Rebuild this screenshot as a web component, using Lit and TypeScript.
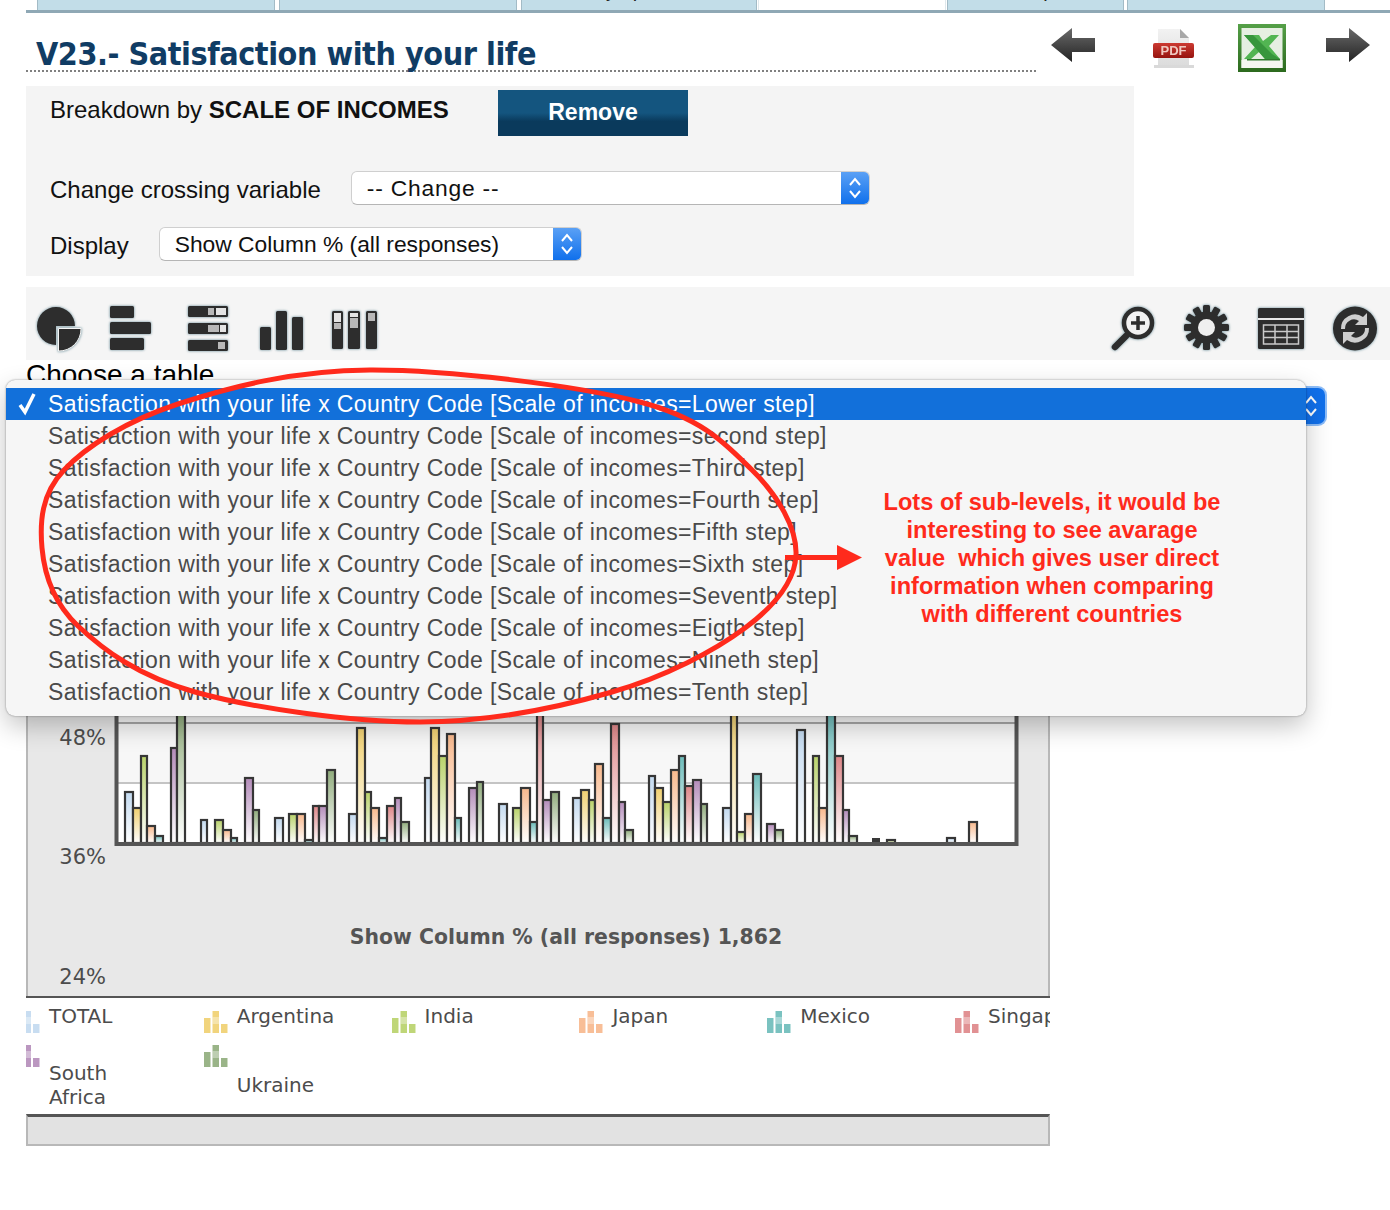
import { LitElement, html, css, svg } from "lit";
import { customElement } from "lit/decorators.js";

const COLORS: Record<string, string> = {
  b: "#c3daf0",
  y: "#f0d070",
  g: "#b9d26a",
  o: "#f8b88c",
  t: "#6cbcba",
  r: "#de8688",
  p: "#b48cba",
  v: "#90ac7c",
};

// x0, x1, top, colour: measured off the plot, page coordinates
const BARS: [number, number, number, string][] = [
  [125, 133, 791, "b"], [133, 141, 807, "y"], [141, 147, 755, "g"], [147, 155, 825, "o"], [155, 163, 835, "t"],
  [171, 177, 747, "p"], [177, 185, 710, "v"],
  [201, 207, 819, "b"], [215, 223, 819, "g"], [223, 231, 829, "o"], [231, 237, 837, "t"], [245, 253, 777, "p"], [253, 259, 809, "v"],
  [275, 283, 817, "b"], [289, 297, 813, "g"], [297, 305, 813, "o"], [305, 313, 839, "t"], [313, 319, 805, "r"], [319, 327, 805, "p"], [327, 335, 769, "v"],
  [349, 357, 813, "b"], [357, 365, 727, "y"], [365, 371, 791, "g"], [371, 379, 807, "o"], [379, 387, 837, "t"], [387, 395, 805, "r"], [395, 401, 797, "p"], [401, 409, 821, "v"],
  [425, 431, 777, "b"], [431, 439, 727, "y"], [439, 447, 755, "g"], [447, 455, 733, "o"], [455, 461, 817, "t"], [469, 477, 787, "p"], [477, 483, 781, "v"],
  [499, 507, 803, "b"], [513, 521, 807, "g"], [521, 530, 787, "o"], [530, 537, 821, "t"], [537, 543, 710, "r"], [543, 551, 799, "p"], [551, 559, 791, "v"],
  [573, 581, 797, "b"], [581, 589, 789, "y"], [589, 595, 799, "g"], [595, 603, 763, "o"], [603, 611, 817, "t"], [611, 619, 723, "r"], [619, 625, 801, "p"], [625, 633, 829, "v"],
  [649, 655, 775, "b"], [655, 663, 787, "y"], [663, 671, 801, "g"], [671, 679, 769, "o"], [679, 685, 755, "t"], [685, 693, 785, "r"], [693, 701, 779, "p"], [701, 707, 803, "v"],
  [723, 731, 807, "b"], [731, 737, 710, "y"], [737, 745, 831, "g"], [745, 753, 813, "o"], [753, 761, 773, "t"], [767, 775, 823, "p"], [775, 783, 829, "v"],
  [797, 805, 729, "b"], [813, 819, 755, "g"], [819, 827, 807, "o"], [827, 835, 710, "t"], [835, 843, 755, "r"], [843, 849, 809, "p"], [849, 857, 835, "v"],
  [887, 895, 839, "g"], [947, 955, 837, "b"], [969, 977, 821, "o"],
];

const LEGEND: { name: string[]; c: string }[] = [
  { name: ["TOTAL"], c: "b" },
  { name: ["Argentina"], c: "y" },
  { name: ["India"], c: "g" },
  { name: ["Japan"], c: "o" },
  { name: ["Mexico"], c: "t" },
  { name: ["Singapore"], c: "r" },
  { name: ["South", "Africa"], c: "p" },
  { name: ["Ukraine"], c: "v" },
];

const TABS: { w: number; gap: number; active?: boolean; label?: string; at?: number }[] = [
  { w: 238, gap: 0 },
  { w: 238, gap: 4 },
  { w: 236, gap: 4, label: "Country / profile", at: 24 },
  { w: 188, gap: 1, active: true },
  { w: 177, gap: 1, label: "Comparison", at: 53 },
  { w: 198, gap: 3 },
];

const OPTIONS = ["Lower", "second", "Third", "Fourth", "Fifth", "Sixth", "Seventh", "Eigth", "Nineth", "Tenth"];

// the hand drawn circle round the list, it is not a true ellipse
const LOOP: [number, number][] = [
  [42, 548], [64, 470], [178, 404], [370, 370], [640, 402], [752, 470],
  [796, 555], [745, 628], [612, 692], [420, 722], [195, 692], [78, 626],
];

const smoothLoop = (pts: [number, number][]) => {
  const n = pts.length;
  let d = `M${pts[0][0]} ${pts[0][1]}`;
  for (let i = 0; i < n; i++) {
    const [p0, p1, p2, p3] = [pts[(i + n - 1) % n], pts[i], pts[(i + 1) % n], pts[(i + 2) % n]];
    d += `C${p1[0] + (p2[0] - p0[0]) / 6} ${p1[1] + (p2[1] - p0[1]) / 6} ${p2[0] - (p3[0] - p1[0]) / 6} ${p2[1] - (p3[1] - p1[1]) / 6} ${p2[0]} ${p2[1]}`;
  }
  return d + "Z";
};

const PANEL_TOP = 430;

const chart = () => {
  const grads = Object.entries(COLORS).map(
    ([k, c]) => svg`<linearGradient id="bar-${k}" x1="0" y1="0" x2="0" y2="1">
      <stop offset="0" stop-color=${c}></stop>
      <stop offset="1" stop-color="#ffffff"></stop>
    </linearGradient>`
  );
  const bars = BARS.map(
    ([x0, x1, top, c]) => svg`<rect x=${x0 - 26} y=${top + 1 - PANEL_TOP} width=${x1 - x0} height=${842 - top}
      fill="url(#bar-${c})" stroke="#363636" stroke-width="2.2"></rect>`
  );
  const T = PANEL_TOP;
  return html`<svg class="chart" width="1024" height=${996 - T} viewBox="0 0 1024 ${996 - T}">
    <defs>${grads}</defs>
    <rect x="91" y=${600 - T} width="899" height="183" fill="#f7f7f7"></rect>
    <rect x="91" y=${783 - T} width="899" height="60" fill="#ffffff"></rect>
    <rect x="91" y=${722 - T} width="899" height="2" fill="#a8a8a8"></rect>
    <rect x="91" y=${782 - T} width="899" height="2" fill="#c4c4c4"></rect>
    ${bars}
    <rect x=${872 - 26} y=${838 - T} width="8" height="5" fill="#383838"></rect>
    <path d="M90.5 ${600 - T}V${844 - T}H990.5V${600 - T}" fill="none" stroke="#555555" stroke-width="4"></path>
    <text class="tick" x="80" y=${745 - T} text-anchor="end">48%</text>
    <text class="tick" x="80" y=${864 - T} text-anchor="end">36%</text>
    <text class="tick" x="80" y=${984 - T} text-anchor="end">24%</text>
    <text class="ctitle" x="540" y=${944 - T} text-anchor="middle">Show Column % (all responses) 1,862</text>
  </svg>`;
};

const legendIcon = (c: string) => html`<svg class="licon" width="24" height="22" viewBox="0 0 24 22">
  <rect x="0" y="7" width="6.5" height="15" fill=${COLORS[c]}></rect>
  <rect x="8.5" y="0" width="6.5" height="22" fill=${COLORS[c]}></rect>
  <rect x="8.5" y="6" width="6.5" height="7" fill="#ffffff" opacity="0.35"></rect>
  <rect x="17" y="13" width="6.5" height="9" fill=${COLORS[c]}></rect>
</svg>`;

@customElement("app-root")
export class AppRoot extends LitElement {
  static styles = css`
    :host {
      display: block;
      position: relative;
      width: 1390px;
      height: 1210px;
      overflow: hidden;
      background: #fff;
      font-family: "Liberation Sans", Arial, sans-serif;
      color: #111;
    }
    .tabs {
      display: flex;
      height: 10px;
      padding-left: 37px;
      align-items: stretch;
    }
    .tabline {
      height: 3px;
      margin-left: 26px;
      background: #8fa8b5;
    }
    .tab {
      box-sizing: border-box;
      background: #c2dde8;
      border: 1px solid #a3bbc6;
      border-width: 0 1px;
      overflow: hidden;
      position: relative;
    }
    .tab.active {
      background: #fff;
      border-color: #dfe8ec;
    }
    .tab span {
      position: absolute;
      bottom: 10px;
      font: 20px "Liberation Sans", sans-serif;
      color: #222;
      line-height: 1;
      white-space: nowrap;
    }
    .head {
      display: flex;
      height: 73px;
      padding-left: 26px;
    }
    .title {
      width: 1010px;
      height: 59px;
      box-sizing: border-box;
      margin: 0;
      padding: 23px 0 0 10px;
      border-bottom: 2px dotted #808080;
      font: bold 32px/36px "DejaVu Sans Condensed", "DejaVu Sans", sans-serif;
      letter-spacing: -0.45px;
      color: #103c64;
      white-space: nowrap;
    }
    .head-icons {
      display: flex;
      align-items: flex-start;
      padding: 11px 0 0 15px;
    }
    .head-icons svg {
      display: block;
      filter: blur(0.4px);
    }
    .i-prev { margin-top: 4px; }
    .i-pdf { margin: 3px 0 0 57px; }
    .i-xls { margin-left: 42px; }
    .i-next { margin: 4px 0 0 40px; }
    .breakdown {
      width: 1108px;
      height: 190px;
      margin-left: 26px;
      box-sizing: border-box;
      background: #f4f4f4;
      padding: 4px 0 0 24px;
      font-size: 24px;
    }
    .row1 {
      display: flex;
      align-items: flex-start;
      height: 81px;
    }
    .row1 .lbl {
      width: 448px;
      padding-top: 4px;
      line-height: 32px;
    }
    .remove {
      width: 190px;
      height: 46px;
      padding: 0 0 1px;
      border: 0;
      color: #fff;
      font: bold 23px "Liberation Sans", sans-serif;
      background: linear-gradient(#14557f 0, #14557f 50%, #0a3a5c 68%, #0a3a5c 100%);
    }
    .row {
      display: flex;
      align-items: center;
      gap: 30px;
      height: 34px;
    }
    .row + .row { margin-top: 22px; }
    .row > span { padding-top: 3px; }
    .select {
      position: relative;
      box-sizing: border-box;
      height: 34px;
      background: #fff;
      border: 1px solid #cfcfcf;
      border-bottom-color: #b5b5b5;
      border-radius: 6px;
      padding-left: 15px;
      font-size: 22.8px;
      line-height: 32px;
      overflow: hidden;
      white-space: nowrap;
    }
    .select.wide { letter-spacing: 0.8px; }
    .select .arrow {
      position: absolute;
      right: 0;
      top: 0;
      bottom: 0;
      width: 28px;
      background: linear-gradient(#5aa0f5, #1070ec);
      display: flex;
      align-items: center;
      justify-content: center;
    }
    .toolbar {
      display: flex;
      justify-content: space-between;
      align-items: flex-start;
      height: 73px;
      margin: 11px 0 0 26px;
      background: #f5f5f5;
    }
    .tools {
      display: flex;
      align-items: flex-start;
      padding-top: 18px;
    }
    .tools svg {
      display: block;
      filter: drop-shadow(0 0 1px #90a8b0) drop-shadow(0 0 1px #b4c6cc);
    }
    .choose {
      margin-left: 26px;
      height: 28px;
      font-size: 28px;
      line-height: 30px;
      color: #000;
    }
    .selectrow {
      position: relative;
      margin-left: 26px;
      width: 1299px;
      height: 36px;
      border-radius: 7px;
      background: #1070ec;
      box-shadow: 0 0 0 2px #8dbdf8;
    }
    .selectrow svg {
      position: absolute;
      right: 7px;
      top: 5px;
    }
    .gap { height: 6px; }
    .panel {
      width: 1024px;
      margin-left: 26px;
      position: relative;
      height: 566px;
      background: #e8e8e8;
    }
    .panel::before, .panel::after {
      content: "";
      position: absolute;
      top: 0;
      bottom: 0;
      width: 2px;
      background: #b8b8b8;
    }
    .panel::before { left: 0; }
    .panel::after { right: 0; }
    .chart { display: block; position: relative; }
    .tick {
      font: 21px "DejaVu Sans", sans-serif;
      fill: #4c4c4c;
    }
    .ctitle {
      font: bold 20.4px "DejaVu Sans", sans-serif;
      fill: #555;
    }
    .legend {
      width: 1024px;
      height: 118px;
      margin-left: 26px;
      box-sizing: border-box;
      border-top: 2px solid #555;
      overflow: hidden;
      color: #4c4c4c;
      font: 20px/24px "DejaVu Sans", sans-serif;
    }
    .legend-grid {
      display: grid;
      grid-template-columns: repeat(6, 187.8px);
      grid-template-rows: 42px 73px;
      margin-left: -10px;
      padding-top: 5px;
    }
    .item {
      display: flex;
      gap: 9px;
      white-space: nowrap;
    }
    .licon {
      flex: none;
      margin-top: 8px;
      opacity: 0.9;
      filter: blur(0.3px);
    }
    .item .name { padding-top: 1px; }
    .legend-grid .item:nth-child(n + 7) .licon { margin-top: 0; }
    .legend-grid .item:nth-child(n + 7) .name { align-self: center; padding-top: 6px; }
    .foot {
      width: 1024px;
      height: 32px;
      margin-left: 26px;
      box-sizing: border-box;
      background: #e2e2e2;
      border: 2px solid #b8b8b8;
      border-top: 3px solid #555;
    }
    .dropdown {
      position: absolute;
      left: 6px;
      top: 380px;
      width: 1300px;
      height: 336px;
      box-sizing: border-box;
      padding-top: 8px;
      border-radius: 9px;
      background: #f6f6f6;
      box-shadow: 0 0 2px rgba(0, 0, 0, 0.45), 0 10px 26px rgba(0, 0, 0, 0.24);
      font-size: 23px;
      letter-spacing: 0.38px;
      color: #4a4a4a;
    }
    .opt {
      position: relative;
      height: 32px;
      line-height: 33px;
      padding-left: 42px;
      white-space: nowrap;
    }
    .opt.sel {
      background: #1270da;
      color: #fff;
    }
    .opt .check {
      position: absolute;
      left: 11px;
      top: 0;
    }
    .markup {
      position: absolute;
      left: 0;
      top: 0;
      pointer-events: none;
    }
    .note {
      position: absolute;
      left: 852px;
      top: 488px;
      width: 400px;
      text-align: center;
      color: #ff2a1c;
      font: bold 23.6px/28px "Liberation Sans", sans-serif;
      white-space: pre;
    }
  `;

  private updown(stroke: string) {
    return html`<svg width="14" height="26" viewBox="0 0 14 26" fill="none" stroke=${stroke} stroke-width="2">
      <path d="M2 10l5-6 5 6M2 16l5 6 5-6"></path>
    </svg>`;
  }

  private headIcons() {
    return html`
      <svg class="i-prev" width="44" height="34" viewBox="0 0 44 34">
        <defs>
          <linearGradient id="arr" x1="0" y1="0" x2="0" y2="1">
            <stop offset="0" stop-color="#6a6a6a"></stop>
            <stop offset="1" stop-color="#232323"></stop>
          </linearGradient>
          <linearGradient id="page" x1="0" y1="0" x2="0" y2="1">
            <stop offset="0" stop-color="#f2f2f2"></stop>
            <stop offset="1" stop-color="#dcdcdc"></stop>
          </linearGradient>
          <linearGradient id="pdfband" x1="0" y1="0" x2="0" y2="1">
            <stop offset="0" stop-color="#cc3a32"></stop>
            <stop offset="1" stop-color="#96140f"></stop>
          </linearGradient>
          <linearGradient id="xlsedge" x1="0" y1="0" x2="0" y2="1">
            <stop offset="0" stop-color="#55a048"></stop>
            <stop offset="1" stop-color="#2c6a1e"></stop>
          </linearGradient>
        </defs>
        <path d="M0 17L21 0V10H44V24H21V34Z" fill="url(#arr)"></path>
      </svg>
      <svg class="i-pdf" width="44" height="42" viewBox="0 0 44 42">
        <path d="M6 2H28L37 11V38H6Z" fill="url(#page)"></path>
        <path d="M28 2L37 11H28Z" fill="#a8a8a8"></path>
        <rect x="2" y="38" width="40" height="3" fill="#d9d9d9"></rect>
        <rect x="1" y="16" width="41" height="15" rx="2" fill="url(#pdfband)"></rect>
        <text x="21.5" y="28" text-anchor="middle" font-family="Liberation Sans" font-weight="700" font-size="13" fill="#f0c8c0">PDF</text>
      </svg>
      <svg class="i-xls" width="48" height="48" viewBox="0 0 48 48">
        <rect width="48" height="48" fill="url(#xlsedge)"></rect>
        <rect x="3.5" y="4" width="41" height="40" fill="#e6efe2"></rect>
        <rect x="3.5" y="36" width="41" height="8" fill="#f5f7f1"></rect>
        <path d="M6 11H21L25 17L33 11H41L31 22L42 35H27L21 28L13 35H6L17 23Z" fill="#52b552"></path>
        <path d="M6 11H15L34 30L42 35H27Z" fill="#37963c"></path>
        <rect x="9" y="35" width="33" height="1.5" fill="#2f7a2d"></rect>
      </svg>
      <svg class="i-next" width="44" height="34" viewBox="0 0 44 34">
        <path d="M44 17L23 0V10H0V24H23V34Z" fill="url(#arr)"></path>
      </svg>
    `;
  }

  private leftTools() {
    const d = "#2d2d2d";
    const l = "#e4e4e4";
    const m = "#b8b8b8";
    return html`
      <svg style="margin-left:11px;margin-top:1px" width="46" height="46" viewBox="0 0 46 46">
        <path d="M19 1A19 19 0 1 0 19 39V20H38A19 19 0 0 0 19 1Z" fill=${d}></path>
        <path d="M21.5 22.5H44A22 22 0 0 1 21.5 45Z" fill=${d} stroke="#f5f5f5" stroke-width="1"></path>
      </svg>
      <svg style="margin-left:25px" width="44" height="46" viewBox="0 0 44 46" fill=${d}>
        <rect x="2" y="1" width="24" height="12" rx="1.5"></rect>
        <rect x="2" y="17" width="41" height="12" rx="1.5"></rect>
        <rect x="2" y="33" width="34" height="12" rx="1.5"></rect>
      </svg>
      <svg style="margin-left:34px" width="44" height="48" viewBox="0 0 44 48">
        <rect x="2" y="1" width="40" height="11" rx="1.5" fill=${d}></rect>
        <rect x="22" y="3" width="6" height="7" fill=${m}></rect><rect x="30" y="3" width="10" height="7" fill=${l}></rect>
        <rect x="2" y="18" width="40" height="11" rx="1.5" fill=${d}></rect>
        <rect x="22" y="20" width="11" height="7" fill=${m}></rect><rect x="34" y="20" width="6" height="7" fill=${l}></rect>
        <rect x="2" y="35" width="40" height="11" rx="1.5" fill=${d}></rect>
        <rect x="32" y="37" width="7" height="7" fill=${m}></rect>
      </svg>
      <svg style="margin-left:28px;margin-top:4px" width="46" height="43" viewBox="0 0 46 43" fill=${d}>
        <rect x="2" y="18" width="11" height="23" rx="1.5"></rect>
        <rect x="18" y="2" width="11" height="39" rx="1.5"></rect>
        <rect x="34" y="8" width="11" height="33" rx="1.5"></rect>
      </svg>
      <svg style="margin-left:26px;margin-top:3px" width="48" height="44" viewBox="0 0 48 44" fill=${d}>
        <rect x="2" y="3" width="11" height="38" rx="1.5"></rect><rect x="4" y="5" width="7" height="9" fill=${l}></rect><rect x="4" y="15" width="7" height="6" fill=${m}></rect>
        <rect x="18" y="3" width="12" height="38" rx="1.5"></rect><rect x="20" y="5" width="8" height="4" fill=${l}></rect><rect x="20" y="10" width="8" height="10" fill=${m}></rect>
        <rect x="36" y="3" width="11" height="38" rx="1.5"></rect><rect x="38" y="5" width="7" height="8" fill=${m}></rect>
      </svg>
    `;
  }

  private rightTools() {
    const d = "#2d2d2d";
    const teeth = Array.from(
      { length: 12 },
      (_, i) => svg`<rect x="19" y="0" width="7" height="10" rx="1.5" fill=${d} transform="rotate(${i * 30} 22.5 22.5)"></rect>`
    );
    return html`
      <svg width="44" height="47" viewBox="0 0 44 47">
        <path d="M4 42L15 31" stroke=${d} stroke-width="6.5" stroke-linecap="round"></path>
        <circle cx="27" cy="18" r="14" fill="#f1f1f1" stroke=${d} stroke-width="4.5"></circle>
        <path d="M27 11V25M20 18H34" stroke=${d} stroke-width="3.5"></path>
      </svg>
      <svg style="margin-left:29px" width="45" height="46" viewBox="0 0 45 46">
        ${teeth}
        <circle cx="22.5" cy="22.5" r="16" fill=${d}></circle>
        <circle cx="22.5" cy="22.5" r="8.5" fill="#efefef"></circle>
      </svg>
      <svg style="margin-left:28px;margin-top:2px" width="48" height="43" viewBox="0 0 48 43">
        <rect x="1" y="1" width="46" height="41" rx="1.5" fill=${d}></rect>
        <rect x="1" y="11" width="46" height="2" fill="#e8e8e8"></rect>
        <path d="M6.5 18H41.5V37H6.5ZM6.5 24.5H41.5M6.5 30.5H41.5M18 18V37M30 18V37" fill="none" stroke="#c9c9c9" stroke-width="1.5"></path>
      </svg>
      <svg style="margin-left:27px;margin-right:12px" width="46" height="47" viewBox="0 0 46 47">
        <circle cx="23" cy="23.5" r="22" fill=${d}></circle>
        <path d="M9 24A14 14 0 0 1 31 12L35 8V20H23L27 16A9 9 0 0 0 13 24ZM37 23A14 14 0 0 1 15 35L11 39V27H23L19 31A9 9 0 0 0 33 23Z" fill="#cfcfcf"></path>
      </svg>
    `;
  }

  render() {
    return html`
      <div class="tabs">
        ${TABS.map(
          (t) => html`<div class="tab ${t.active ? "active" : ""}" style="width:${t.w}px;margin-left:${t.gap}px">
            ${t.label ? html`<span style="left:${t.at}px">${t.label}</span>` : ""}
          </div>`
        )}
      </div>
      <div class="tabline"></div>
      <div class="head">
        <h1 class="title">V23.- Satisfaction with your life</h1>
        <div class="head-icons">${this.headIcons()}</div>
      </div>
      <div class="breakdown">
        <div class="row1">
          <div class="lbl">Breakdown by <b>SCALE OF INCOMES</b></div>
          <button class="remove">Remove</button>
        </div>
        <div class="row">
          <span>Change crossing variable</span>
          <div class="select wide" style="width:519px">-- Change --<span class="arrow">${this.updown("#fff")}</span></div>
        </div>
        <div class="row">
          <span>Display</span>
          <div class="select" style="width:423px">Show Column % (all responses)<span class="arrow">${this.updown("#fff")}</span></div>
        </div>
      </div>
      <div class="toolbar">
        <div class="tools">${this.leftTools()}</div>
        <div class="tools">${this.rightTools()}</div>
      </div>
      <div class="choose">Choose a table</div>
      <div class="selectrow">${this.updown("#fff")}</div>
      <div class="gap"></div>
      <div class="panel">${chart()}</div>
      <div class="legend">
        <div class="legend-grid">
          ${LEGEND.map(
            (l) => html`<div class="item">
              ${legendIcon(l.c)}
              <div class="name">${l.name.map((n, i) => html`${i ? html`<br />` : ""}${n}`)}</div>
            </div>`
          )}
        </div>
      </div>
      <div class="foot"></div>
      <div class="dropdown">
        ${OPTIONS.map(
          (o, i) => html`<div class="opt ${i === 0 ? "sel" : ""}">
            ${i === 0
              ? html`<svg class="check" width="22" height="32" viewBox="0 0 22 32"><path d="M3 17L8 24L17 6" fill="none" stroke="#fff" stroke-width="3.5"></path></svg>`
              : ""}
            Satisfaction with your life x Country Code [Scale of incomes=${o} step]
          </div>`
        )}
      </div>
      <svg class="markup" width="1390" height="1210" viewBox="0 0 1390 1210">
        <path d=${smoothLoop(LOOP)} fill="none" stroke="#ff2a1c" stroke-width="5"></path>
        <rect x="785" y="555" width="54" height="5" fill="#ff2a1c"></rect>
        <path d="M837 545L862 557.5L837 570Z" fill="#ff2a1c"></path>
      </svg>
      <div class="note">Lots of sub-levels, it would be
interesting to see avarage
value  which gives user direct
information when comparing
with different countries</div>
    `;
  }
}
